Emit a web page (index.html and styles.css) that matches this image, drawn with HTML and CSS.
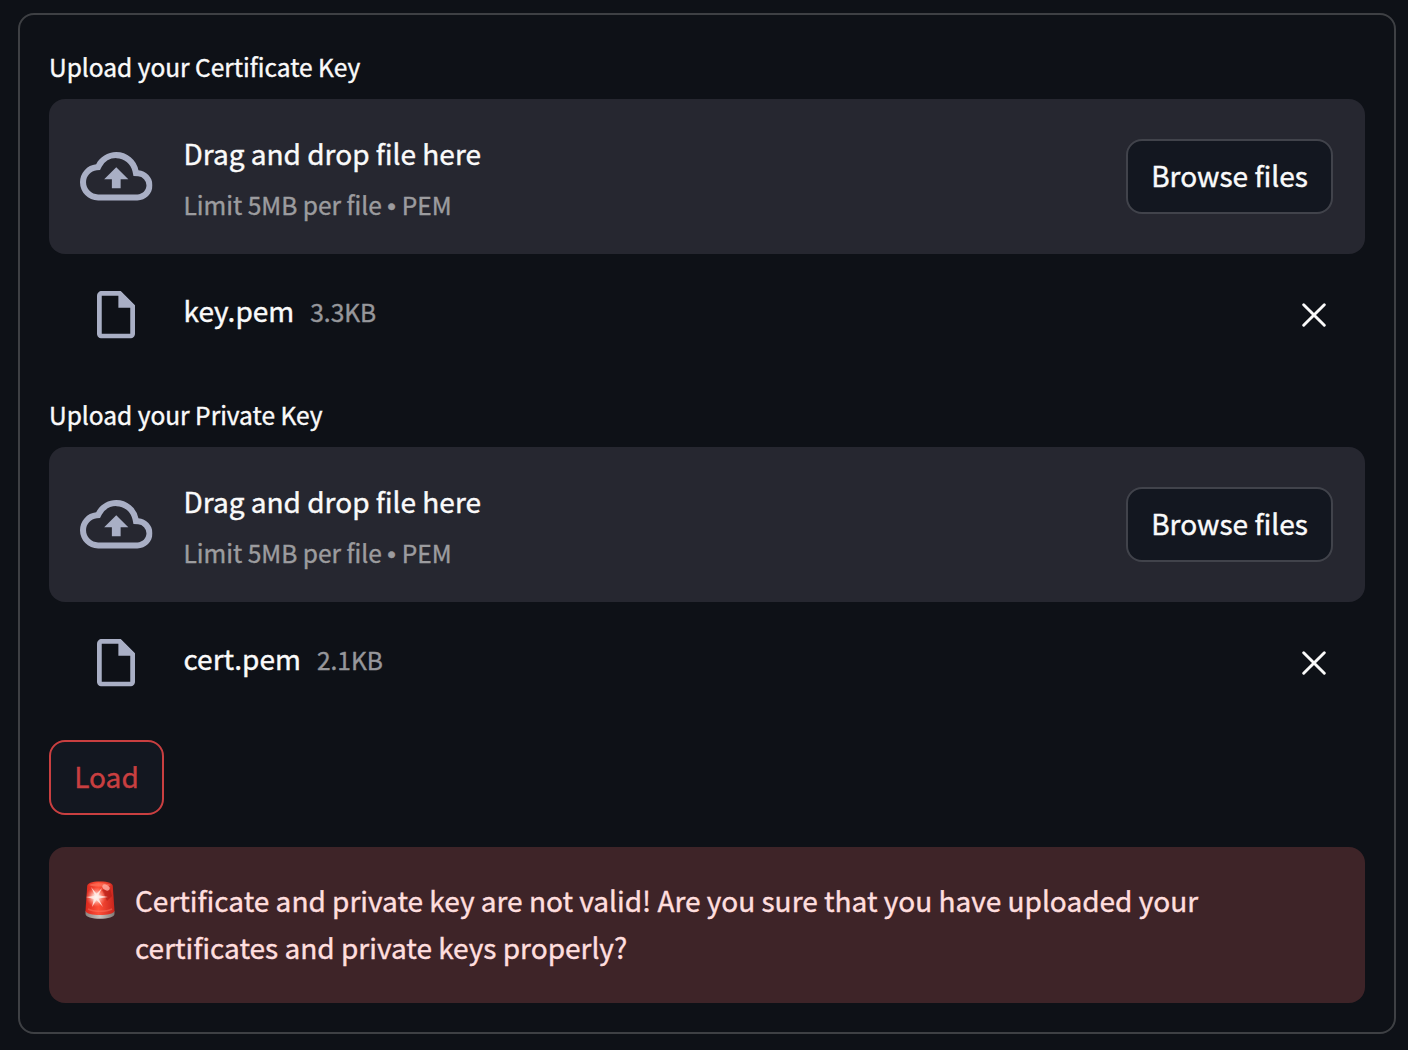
FILE: index.html
```html
<!DOCTYPE html>
<html lang="en">
<head>
<meta charset="utf-8">
<title>Upload keys</title>
<link rel="stylesheet" href="styles.css">
</head>
<body>
<svg class="defs" width="0" height="0" aria-hidden="true">
  <symbol id="cloud" viewBox="0 0 24 24"><path d="M19.35 10.04A7.49 7.49 0 0 0 12 4C9.11 4 6.6 5.64 5.35 8.04A5.994 5.994 0 0 0 0 14c0 3.31 2.69 6 6 6h13c2.76 0 5-2.24 5-5 0-2.64-2.05-4.78-4.65-4.96zM19 18H6c-2.21 0-4-1.79-4-4 0-2.05 1.53-3.76 3.56-3.97l1.07-.11.5-.95A5.469 5.469 0 0 1 12 6c2.62 0 4.88 1.86 5.39 4.43l.3 1.5 1.53.11A2.98 2.98 0 0 1 22 15c0 1.65-1.35 3-3 3zM8 13h2.55v3h2.9v-3H16l-4-4z"/></symbol>
  <symbol id="file" viewBox="4 2 16 20"><path d="M14 2H6c-1.1 0-1.99.9-1.99 2L4 20c0 1.1.89 2 1.99 2H18c1.1 0 2-.9 2-2V8l-6-6zM6 20V4h7v5h5v11H6z"/></symbol>
  <symbol id="close" viewBox="0 0 24 24"><path d="M1.7 1.7 22.3 22.3M22.3 1.7 1.7 22.3" fill="none" stroke="currentColor" stroke-width="2.9" stroke-linecap="round"/></symbol>
</svg>
<main class="panel">
  <section class="uploader">
    <div class="label">Upload your Certificate Key</div>
    <div class="dropzone">
      <svg class="cloud"><use href="#cloud"/></svg>
      <div class="hint">
        <div class="title">Drag and drop file here</div>
        <div class="limit">Limit 5MB per file <span class="dot">•</span> PEM</div>
      </div>
      <button class="button">Browse files</button>
    </div>
    <div class="file">
      <svg class="file-icon"><use href="#file"/></svg>
      <span class="file-name">key.pem</span>
      <span class="file-size">3.3KB</span>
      <button class="remove" aria-label="Remove"><svg class="cross"><use href="#close"/></svg></button>
    </div>
  </section>
  <section class="uploader">
    <div class="label">Upload your Private Key</div>
    <div class="dropzone">
      <svg class="cloud"><use href="#cloud"/></svg>
      <div class="hint">
        <div class="title">Drag and drop file here</div>
        <div class="limit">Limit 5MB per file <span class="dot">•</span> PEM</div>
      </div>
      <button class="button">Browse files</button>
    </div>
    <div class="file">
      <svg class="file-icon"><use href="#file"/></svg>
      <span class="file-name">cert.pem</span>
      <span class="file-size">2.1KB</span>
      <button class="remove" aria-label="Remove"><svg class="cross"><use href="#close"/></svg></button>
    </div>
  </section>
  <button class="button load">Load</button>
  <div class="alert">
    <svg class="siren" viewBox="0 0 32 40">
      <defs>
        <linearGradient id="dome" x1="0" x2="1"><stop offset="0" stop-color="#d9271d"/><stop offset=".45" stop-color="#ff5038"/><stop offset="1" stop-color="#c9241c"/></linearGradient>
        <linearGradient id="base" x1="0" x2="1"><stop offset="0" stop-color="#8b8480"/><stop offset=".5" stop-color="#c9c2bc"/><stop offset="1" stop-color="#807a76"/></linearGradient>
        <radialGradient id="glow"><stop offset="0" stop-color="#fff"/><stop offset=".35" stop-color="#ffd9cf" stop-opacity=".85"/><stop offset="1" stop-color="#ff8a78" stop-opacity="0"/></radialGradient>
      </defs>
      <path d="M1.500 31h29v3C30.500 37 24 38.800 16 38.800S1.500 37 1.500 34z" fill="url(#base)"/>
      <path d="M3.200 6C3.500 3.300 7 1.500 16 1.500S28.500 3.300 28.800 6L30.500 31c-1 2.800-6.500 4-14.500 4S2.500 33.800 1.500 31z" fill="url(#dome)"/>
      <path d="M5 5c3-2.500 19-2.500 22 0-4 2-18 2-22 0z" fill="#ff7a62" opacity=".6"/>
      <path d="M18 10l8-2 2 8-5 5z" fill="#a91814" opacity=".55"/>
      <path d="M4 29c6 3 18 3 24 0" fill="none" stroke="#ff765f" stroke-width="1.500" opacity=".5"/>
      <circle cx="12" cy="17" r="10" fill="url(#glow)"/>
      <path d="M10.800 15L7 7l5.500 6.800L18 8l-3.600 7.200L24 17l-9.500 1.400L19 27l-6.500-7L8 27l1.800-8L2 17l7.800-1z" fill="#fff0eb" opacity=".8"/>
      <ellipse cx="22" cy="7.500" rx="4" ry="2.500" transform="rotate(30 22 7.500)" fill="#ffaaa0" opacity=".85"/>
    </svg>
    <p class="message">Certificate and private key are not valid! Are you sure that you have uploaded your certificates and private keys properly?</p>
  </div>
</main>
</body>
</html>
```
FILE: styles.css
```css
* { box-sizing: border-box; }

body {
  margin: 0;
  padding: 13px 12px 0 17.500px;
  background: #0e1117;
  color: #fafafa;
  font-family: "Noto Sans CJK SC", "Noto Sans", sans-serif;
  font-size: 28.030px;
  -webkit-text-stroke: 0.4px currentColor;
}

.defs { display: none; }

.panel {
  height: 1021px;
  padding: 29px 29px 29px 29.500px;
  border: 2px solid #3e4044;
  border-radius: 16px;
}

.uploader { height: 348px; }

.label {
  height: 55px;
  padding-top: 3px;
  font-size: 24.5px;
  line-height: 40px;
}

.dropzone {
  display: flex;
  align-items: center;
  height: 155px;
  padding: 0 32px 0 31px;
  border-radius: 16px;
  background: #262730;
}

.cloud {
  width: 72.500px;
  height: 72.500px;
  margin-right: 31px;
  fill: #a9afc5;
}

.hint {
  flex: 1;
  padding-top: 1px;
  white-space: nowrap;
}

.title { line-height: 48px; }

.limit {
  padding-top: 8px;
  font-size: 24.5px;
  line-height: 40px;
  color: #9c9c9f;
}

.dot {
  display: inline-block;
  width: 9px;
  font-family: "Liberation Sans", sans-serif;
  line-height: 1;
}

.button {
  width: 207px;
  height: 75px;
  padding: 0 0 5px;
  border: 2px solid #41434b;
  border-radius: 16px;
  background: #131720;
  color: #fafafa;
  font: inherit;
  white-space: nowrap;
}

.file {
  display: flex;
  align-items: center;
  height: 122px;
  padding: 0 39px 0 48px;
}

.file-icon {
  width: 38px;
  height: 47.500px;
  margin-right: 48.500px;
  fill: #a9afc5;
}

.file-name {
  margin-right: 16px;
  padding-bottom: 11px;
}

.file-size {
  padding-bottom: 8px;
  font-size: 24.5px;
  color: #96979b;
}

.remove {
  width: 24px;
  height: 24px;
  margin-left: auto;
  padding: 0;
  border: 0;
  background: none;
  color: #fafafa;
}

.cross {
  display: block;
  width: 24px;
  height: 24px;
}

.load {
  display: block;
  width: 115px;
  border-color: #c93f40;
  color: #c93f40;
}

.alert {
  display: flex;
  height: 156.500px;
  margin-top: 31.500px;
  padding: 30px 32px;
  border-radius: 16px;
  background: #3e2428;
  color: #ffdede;
}

.siren {
  flex: none;
  width: 32px;
  height: 40px;
  margin: 3px 19px 0 3px;
}

.message {
  margin: -0.500px 0 0;
  line-height: 47px;
}
```
